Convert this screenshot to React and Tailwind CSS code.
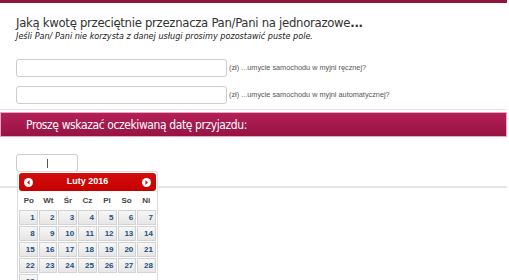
import React from 'react';

const days = Array.from({ length: 29 }, (_, i) => i + 1);
const weekdays = ['Po', 'Wt', 'Śr', 'Cz', 'Pi', 'So', 'Ni'];

function Circle({ dir }) {
  return (
    <svg width="9" height="9" viewBox="0 0 10 10">
      <circle cx="5" cy="5" r="5" fill="#fff" />
      {dir === 'left'
        ? <path d="M6.2 2.6 L3.4 5 L6.2 7.4 Z" fill="#cc0000" />
        : <path d="M3.8 2.6 L6.6 5 L3.8 7.4 Z" fill="#cc0000" />}
    </svg>
  );
}

export default function App() {
  return (
    <div className="relative w-[509px] h-[280px] overflow-hidden bg-white font-['DejaVu_Sans',sans-serif]">
      {/* top bar */}
      <div className="h-[3px] w-[507px] bg-[#8e1537]" />

      {/* question */}
      <div className="pl-4 pt-[11px]">
        <div className="text-[13px] leading-[17px] text-[#333] tracking-[-0.3px] font-['DejaVu_Sans_Condensed',sans-serif]">
          Jaką kwotę przeciętnie przeznacza Pan/Pani na jednorazowe<b>...</b>
        </div>
        <p className="text-[8.1px] leading-[10px] italic text-[#222]">
          Jeśli Pan/ Pani nie korzysta z danej usługi prosimy pozostawić puste pole.
        </p>
      </div>

      {/* inputs */}
      <div className="pl-4 pt-[18px] flex flex-col gap-[9px] font-['Liberation_Sans',sans-serif]">
        {['ręcznej?', 'automatycznej?'].map((t, i) => (
          <div key={i} className="flex items-center gap-[2px]">
            <div className="w-[211px] h-[18px] rounded-[3px] border border-[#ccc] bg-white" />
            <span className="text-[7.3px] text-[#555]">
              (zł) <span className="text-[#8a5a2b]">...</span>umycie samochodu w myjni {t}
            </span>
          </div>
        ))}
      </div>

      <div className="mt-[5px] h-px w-[507px] bg-[#f2dbe2]" />

      {/* section header */}
      <div className="mt-[2px] w-[507px] h-[25px] flex items-center pl-[25px] border border-[#e9a7bd] bg-gradient-to-b from-[#b41f57] to-[#971342]">
        <span className="text-white text-[12px] tracking-[-0.4px] font-['DejaVu_Sans_Condensed',sans-serif]">
          Proszę wskazać oczekiwaną datę przyjazdu:
        </span>
      </div>

      {/* date input */}
      <div className="pl-4 pt-[17px]">
        <div className="w-[62px] h-[18px] rounded-[3px] border border-[#ccc] flex items-center justify-center">
          <span className="w-px h-[9px] bg-[#555]" />
        </div>
      </div>
      <div className="mt-[14px] h-[2px] w-[507px] bg-[#e6e6e6]" />

      {/* datepicker */}
      <div className="absolute left-[17px] top-[171px] w-[141px] h-[120px] bg-white border border-[#ddd] rounded-[3px] p-px font-['Liberation_Sans',sans-serif]">
        <div className="h-[18px] rounded-[3px] bg-gradient-to-b from-[#d40d0d] to-[#c60000] flex items-center justify-between px-[5px]">
          <Circle dir="left" />
          <span className="text-white text-[9px] font-bold">Luty 2016</span>
          <Circle dir="right" />
        </div>
        <div className="grid grid-cols-7 h-[19px] items-center text-center text-[8px] font-bold text-[#444]">
          {weekdays.map(w => <span key={w}>{w}</span>)}
        </div>
        <div className="grid grid-cols-7 gap-px">
          {days.map(d => (
            <div key={d} className="h-[15px] border border-[#d3d3d3] bg-gradient-to-b from-[#f6f6f6] to-[#e6e6e6] text-right pr-[2px] text-[8px] leading-[13px] font-bold text-[#1c4f80]">
              {d}
            </div>
          ))}
        </div>
      </div>
    </div>
  );
}
